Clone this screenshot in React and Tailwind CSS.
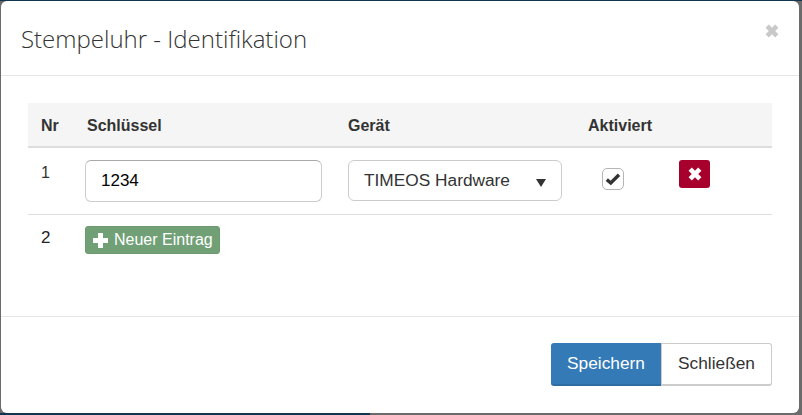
import React from 'react'

// chunky glyphicon-style cross, the package ones come out too thin
const Cross = ({ className }) => (
  <svg viewBox="0 0 14 14" width="14" height="14" className={className}>
    <path d="M2.2 2.2 L11.8 11.8 M11.8 2.2 L2.2 11.8" stroke="currentColor" strokeWidth="4.6" />
  </svg>
)

export default function App() {
  return (
    <div className="flex h-[415px] w-[802px] flex-col overflow-hidden bg-[#6b6b6b] font-['Liberation_Sans',Arial,sans-serif] text-[#333]">
      <div className="h-px shrink-0 bg-[#12344d]" />
      <div className="ml-px flex h-[412px] w-[798px] shrink-0 flex-col rounded-[6px] bg-white">

        {/* Header */}
        <div className="relative h-[75px] shrink-0 border-b border-[#e5e5e5] pl-[20px] pt-[21px]">
          <h4 className="font-['Open_Sans',sans-serif] text-[24px] font-light leading-[34px] text-[#333]">Stempeluhr - Identifikation</h4>
          <Cross className="absolute right-[20px] top-[23px] text-[#c9c9c9]" />
        </div>

        {/* Table */}
        <div className="h-[240px] shrink-0 px-[27px] pt-[27px]">
          <div className="flex h-[45px] items-center border-b-2 border-[#ddd] bg-[#f5f5f5] pt-[2px] text-[16px] font-bold">
            <div className="w-[59px] pl-[13px]">Nr</div>
            <div className="w-[261px]">Schlüssel</div>
            <div className="w-[240px]">Gerät</div>
            <div>Aktiviert</div>
          </div>
          <div className="flex h-[67px] border-b border-[#ddd] pt-[12px]">
            <div className="w-[57px] pl-[13px] pt-[3px] text-[16px] leading-[20px]">1</div>
            <input readOnly value="1234" className="h-[42px] w-[237px] rounded-[6px] border border-[#ccc] border-t-[#a9a9a9] pl-[15px] text-[17px] text-black outline-none" />
            <div className="ml-[26px] flex h-[41px] w-[214px] items-center justify-between rounded-[6px] border border-[#ccc] pl-[15px] pr-[15px] text-[17.3px]">
              <span>TIMEOS Hardware</span>
              <span className="mt-[4px] h-0 w-0 border-x-[5px] border-t-[8px] border-x-transparent border-t-[#333]" />
            </div>
            <div className="ml-[40px] mt-[8px] flex h-[22px] w-[22px] items-center justify-center rounded-[5px] border border-[#b5b5b5]">
              <svg viewBox="0 0 16 14" width="16" height="14">
                <path d="M1.8 7.6 L5.8 11 L14 2.8" fill="none" stroke="#333" strokeWidth="3.4" />
              </svg>
            </div>
            <div className="ml-[55px] flex h-[28px] w-[31px] items-center justify-center rounded-[3px] bg-[#a8002c] text-white">
              <Cross />
            </div>
          </div>
          <div className="flex pt-[11px]">
            <div className="w-[57px] pl-[13px] pt-[2px] text-[17px] leading-[20px] text-[#222]">2</div>
            <button className="flex h-[28px] w-[135px] items-center gap-[6px] rounded-[3px] border border-[#6a9a6e] bg-[#71a076] pl-[7px] text-[16px] text-white">
              <svg viewBox="0 0 15 15" width="15" height="15" className="shrink-0">
                <path d="M5 0h5v5h5v5h-5v5H5v-5H0V5h5z" fill="currentColor" />
              </svg>
              <span>Neuer Eintrag</span>
            </button>
          </div>
        </div>

        {/* Footer */}
        <div className="flex flex-1 justify-end border-t border-[#e5e5e5] pr-[27px] pt-[26px]">
          <button className="h-[43px] w-[110px] rounded-l-[3px] border-b-2 border-[#2e6da4] bg-[#337ab7] text-[17.3px] text-white">Speichern</button>
          <button className="h-[43px] w-[111px] rounded-r-[3px] border border-b-2 border-[#ccc] bg-white text-[17.3px] text-[#333]">Schließen</button>
        </div>
      </div>
      <div className="h-[2px] w-[370px] shrink-0 bg-[#12344d]" />
    </div>
  )
}
